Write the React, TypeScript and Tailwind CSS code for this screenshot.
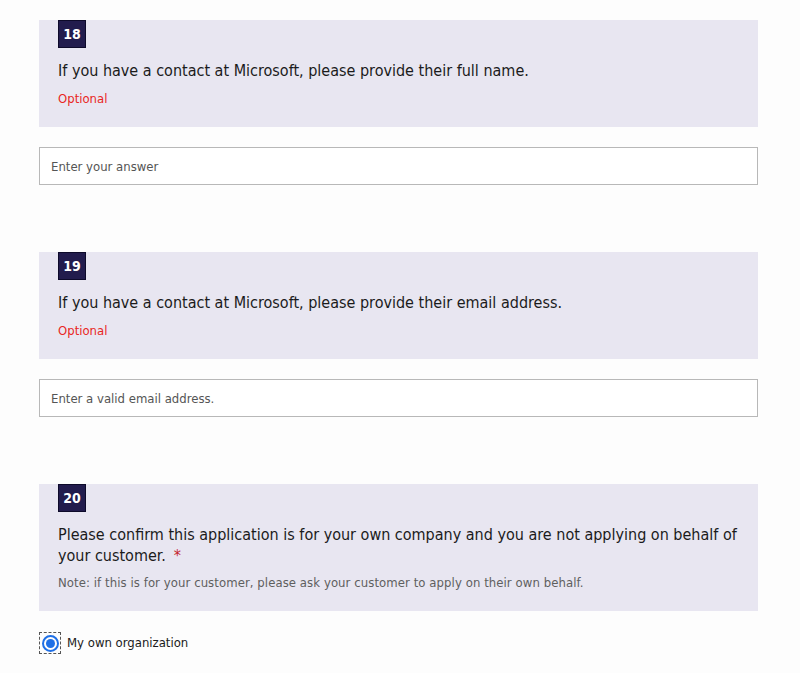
import React from 'react';

// ---------------------------------------------------------------------------
// Question header card
// ---------------------------------------------------------------------------

function QuestionCard({
  number,
  children,
}: {
  number: number;
  children: React.ReactNode;
}) {
  return (
    <div className="bg-[#e8e6f1] px-[19px] pb-[18px]">
      <div className="flex h-[28px] w-[28px] items-center justify-center border border-[#0d0a2a] bg-[#221c4d] text-[14px] font-bold text-white">
        {number}
      </div>
      <div className="mt-[12px]">{children}</div>
    </div>
  );
}

function TextAnswer({ placeholder }: { placeholder: string }) {
  return (
    <input
      type="text"
      placeholder={placeholder}
      className="mt-[20px] block h-[38px] w-full border border-[#b8b8b8] bg-white px-[11px] text-[13px] text-[#333] placeholder:text-[#555]"
    />
  );
}

export default function App() {
  return (
    <div
      className="min-h-[673px] bg-[#fdfdfd] pl-[39px] pr-[42px] pt-[20px] text-[#1b1b1b]"
      style={{ fontFamily: '"DejaVu Sans Condensed", "DejaVu Sans", sans-serif' }}
    >
      {/* 18 */}
      <QuestionCard number={18}>
        <p className="text-[16px] leading-[21px]">
          If you have a contact at Microsoft, please provide their full name.
        </p>
        <p className="mt-[8px] text-[13px] leading-[20px] text-[#e8271f]">Optional</p>
      </QuestionCard>
      <TextAnswer placeholder="Enter your answer" />

      {/* 19 */}
      <div className="mt-[67px]">
        <QuestionCard number={19}>
          <p className="text-[16px] leading-[21px]">
            If you have a contact at Microsoft, please provide their email address.
          </p>
          <p className="mt-[8px] text-[13px] leading-[20px] text-[#e8271f]">Optional</p>
        </QuestionCard>
      </div>
      <TextAnswer placeholder="Enter a valid email address." />

      {/* 20 */}
      <div className="mt-[67px]">
        <QuestionCard number={20}>
          <p className="-mr-[6px] text-[16px] leading-[21px]">
            Please confirm this application is for your own company and you are not applying on
            behalf of your customer.
            <span className="ml-[8px] text-[#c4262e]">*</span>
          </p>
          <p className="mt-[7px] text-[13px] leading-[20px] tracking-[0.07px] text-[#5f5f5f]">
            Note: if this is for your customer, please ask your customer to apply on their own behalf.
          </p>
        </QuestionCard>
      </div>

      <label className="mt-[21px] flex items-center gap-[6px] text-[13px]">
        <span className="flex h-[22px] w-[22px] items-center justify-center border border-dashed border-[#555]">
          <span className="flex h-[17px] w-[17px] items-center justify-center rounded-full border-[2px] border-[#1e6fe6]">
            <span className="h-[9px] w-[9px] rounded-full bg-[#1e6fe6]" />
          </span>
        </span>
        My own organization
      </label>
    </div>
  );
}
